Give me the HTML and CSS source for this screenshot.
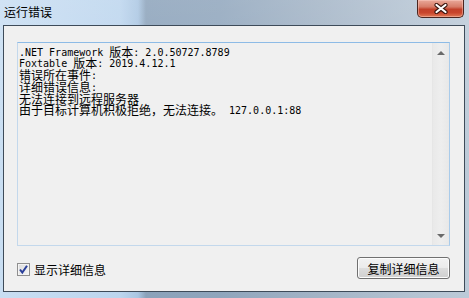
FILE: index.html
```html
<!DOCTYPE html>
<html lang="zh-CN">
<head>
  <meta charset="UTF-8">
  <meta name="viewport" content="width=device-width, initial-scale=1.0">
  <title>运行错误</title>
  <link rel="stylesheet" href="styles.css">
</head>
<body>
  <div class="window">
    <div class="titlebar">
      <span class="title">运行错误</span>
      <button class="close" title="关闭">
        <svg width="14" height="11" viewBox="0 0 14 11">
          <path d="M2.5 2 L11.5 9 M11.5 2 L2.5 9" stroke="#3b1710" stroke-width="4.2" stroke-linecap="round"/>
          <path d="M2.5 2 L11.5 9 M11.5 2 L2.5 9" stroke="#ffffff" stroke-width="2.2" stroke-linecap="round"/>
        </svg>
      </button>
    </div>

    <div class="client">
      <div class="textbox">
        <div class="text">
          <div class="line">.NET Framework <span class="cjk">版本</span>: 2.0.50727.8789</div>
          <div class="line">Foxtable <span class="cjk">版本</span>: 2019.4.12.1</div>
          <div class="line"><span class="cjk">错误所在事件</span>:</div>
          <div class="line"><span class="cjk">详细错误信息</span>:</div>
          <div class="line"><span class="cjk">无法连接到远程服务器</span></div>
          <div class="line"><span class="cjk">由于目标计算机积极拒绝，无法连接。</span> 127.0.0.1:88</div>
        </div>
        <div class="scrollbar">
          <span class="arrow up"></span>
          <span class="arrow down"></span>
        </div>
      </div>

      <div class="bottom">
        <label class="check">
          <span class="box">
            <svg width="11" height="11" viewBox="0 0 11 11">
              <path d="M2 5.5 L4.3 8.5 L9 1.8" fill="none" stroke="#2a3f9a" stroke-width="2"/>
            </svg>
          </span>
          显示详细信息
        </label>
        <button class="copy">复制详细信息</button>
      </div>
    </div>
  </div>
</body>
</html>
```

FILE: styles.css
```css
body {
  margin: 0;
  padding: 0;
  font-family: "Noto Sans CJK SC", "Liberation Sans", sans-serif;
  font-size: 12px;
}
.window {
  width: 469px;
  height: 298px;
  display: flex;
  flex-direction: column;
  background:
    linear-gradient(to bottom, rgba(255, 255, 255, 0.15), rgba(255, 255, 255, 0) 60%),
    linear-gradient(to right, #c9def2 0, #bcd5ee 120px, #aac6e2 138px, #8ba2ba 146px, #8fa5bc 220px, #a3b4c6 320px, #b5c4d3 420px, #bccad8 469px);
}
.titlebar {
  height: 25px;
  display: flex;
  justify-content: space-between;
  align-items: flex-start;
}
.title {
  margin: 4px 0 0 4px;
  line-height: 16px;
  color: #000;
}
.close {
  width: 47px;
  height: 18px;
  margin-right: 5px;
  padding: 0;
  border: 1px solid #4b2620;
  border-top: none;
  border-radius: 0 0 5px 5px;
  background: linear-gradient(to bottom, #e9a99a 0%, #d77c68 40%, #c2412a 55%, #c9452c 75%, #e07a56 100%);
  box-shadow: inset 0 0 0 1px rgba(255, 210, 200, 0.45);
  display: flex;
  align-items: center;
  justify-content: center;
}
.client {
  flex: 1;
  margin: 0 4px 6px 3px;
  border: 1px solid #3e4b59;
  background: #f0f0f0;
  padding: 16px 14px 12px 13px;
  display: flex;
  flex-direction: column;
}
.textbox {
  height: 202px;
  border: 1px solid #c3d8ec;
  border-top-color: #8dbbe6;
  border-right-color: #a9cbea;
  background: #f0f0f0;
  display: flex;
}
.text {
  flex: 1;
  padding: 3.5px 0 0 1px;
  font-family: "DejaVu Sans Mono", "Liberation Mono", monospace;
  font-size: 10px;
  color: #000;
}
.line {
  height: 11.8px;
  line-height: 11.8px;
  white-space: pre;
}
.cjk {
  font-family: "Noto Sans CJK SC", sans-serif;
  font-size: 12px;
  line-height: 0;
  vertical-align: -1px;
}
.scrollbar {
  width: 16px;
  border-left: 1px solid #e6e6e6;
  background: linear-gradient(to right, #e9e9e9, #eeeeee 50%, #e8e8e8);
  display: flex;
  flex-direction: column;
  justify-content: space-between;
  align-items: center;
  padding: 8px 0 7px;
}
.arrow {
  width: 0;
  height: 0;
  border-left: 4px solid transparent;
  border-right: 4px solid transparent;
}
.arrow.up {
  border-bottom: 4px solid #6a6a6a;
}
.arrow.down {
  border-top: 4px solid #6a6a6a;
}
.bottom {
  margin-top: 11px;
  height: 22px;
  display: flex;
  justify-content: space-between;
  align-items: center;
}
.check {
  display: flex;
  align-items: center;
  gap: 4px;
  margin-top: 3px;
  color: #000;
}
.box {
  width: 11px;
  height: 11px;
  border: 1px solid #8f8f8f;
  background: linear-gradient(135deg, #dcdcdc, #f6f6f6);
  box-shadow: inset 0 0 0 1px #f4f4f4;
  display: flex;
}
.copy {
  width: 93px;
  height: 22px;
  padding: 0;
  font-family: "Noto Sans CJK SC", sans-serif;
  font-size: 12px;
  color: #000;
  border: 1px solid #707070;
  border-radius: 3px;
  background: linear-gradient(to bottom, #f2f2f2 0%, #ebebeb 50%, #dddddd 51%, #cfcfcf 100%);
  box-shadow: inset 0 0 0 1px #fcfcfc;
}
```
